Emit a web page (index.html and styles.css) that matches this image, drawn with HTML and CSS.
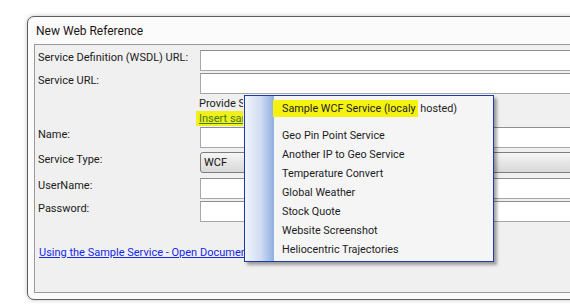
FILE: index.html
```html
<!DOCTYPE html>
<html>
<head>
<meta charset="utf-8">
<link rel="stylesheet" href="styles.css">
</head>
<body>
<div class="window">
  <div class="title">New Web Reference</div>
  <div class="panel">
    <div class="row r1"><div class="lbl">Service Definition (WSDL) URL:</div><div class="field"></div></div>
    <div class="row r2"><div class="lbl">Service URL:</div><div class="field"></div></div>
    <div class="hint">
      <div class="provide">Provide Service details</div>
      <div class="insert"><span class="hl-link"><a href="#" class="link-green">Insert sample service</a></span></div>
    </div>
    <div class="row r-name"><div class="lbl">Name:</div><div class="field"></div></div>
    <div class="row r-type"><div class="lbl">Service Type:</div><div class="select">WCF</div></div>
    <div class="row r-user"><div class="lbl">UserName:</div><div class="field"></div></div>
    <div class="row r-pass"><div class="lbl">Password:</div><div class="field"></div></div>
    <div class="doclink"><a href="#">Using the Sample Service - Open Documentation</a></div>
  </div>
</div>

<div class="menu">
  <div class="strip"></div>
  <ul class="items">
    <li class="item first"><span class="marker">Sample WCF Service (localy</span> hosted)</li>
    <li class="sep"></li>
    <li class="item">Geo Pin Point Service</li>
    <li class="item">Another IP to Geo Service</li>
    <li class="item">Temperature Convert</li>
    <li class="item">Global Weather</li>
    <li class="item">Stock Quote</li>
    <li class="item">Website Screenshot</li>
    <li class="item">Heliocentric Trajectories</li>
  </ul>
</div>
</body>
</html>
```

FILE: styles.css
```css
html, body {
  margin: 0;
  padding: 0;
  background: #ffffff;
  overflow: hidden;
  width: 570px;
  height: 304px;
}
body {
  font-family: Roboto, "Liberation Sans", Arial, sans-serif;
  font-size: 11px;
  color: #1b1b1b;
  position: relative;
}
.window {
  margin: 16px 0 0 27px;
  width: 600px;
  box-sizing: border-box;
  border: 1px solid #5e5e5e;
  border-radius: 7px 7px 0 7px;
  background: #fbfbfb;
  box-shadow: 0 0 4px rgba(0, 0, 0, 0.25);
  padding: 0 6px 6px 6px;
}
.title {
  height: 27px;
  box-sizing: border-box;
  padding: 2px 0 0 2px;
  line-height: 25px;
  font-size: 12px;
  color: #1e1414;
}
.panel {
  height: 249px;
  box-sizing: border-box;
  border: 1px solid #9a9a9a;
  background: #f0f0f0;
  padding: 5px 0 0 3px;
  display: flex;
  flex-direction: column;
}
.row {
  display: flex;
  align-items: flex-start;
  height: 21px;
}
.lbl {
  width: 162px;
  flex: none;
  line-height: 15px;
}
.field {
  flex: 1;
  height: 21px;
  box-sizing: border-box;
  border: 1px solid #a7a7a7;
  border-top-color: #8e8e8e;
  background: #ffffff;
}
.r2 { margin-top: 2px; }
.hint {
  height: 33px;
  box-sizing: border-box;
  padding: 2px 0 0 161px;
  line-height: 15px;
}
.provide {
  color: #1b1b1b;
  width: 44px;
  overflow: hidden;
  white-space: nowrap;
}
.insert {
  margin-left: -3px;
  width: 47px;
  overflow: hidden;
  white-space: nowrap;
}
.hl-link {
  background: #f2f01a;
  padding: 1px 3px 1px 3px;
}
.link-green {
  color: #3f7a1c;
  text-decoration: underline;
}
.r-type { margin-top: 4px; }
.r-user { margin-top: 5px; }
.r-pass { margin-top: 2px; }
.select {
  flex: 1;
  height: 21px;
  box-sizing: border-box;
  border: 1px solid #7d7d7d;
  border-radius: 3px;
  background: linear-gradient(#f6f6f6, #e6e6e6 50%, #d8d8d8);
  line-height: 19px;
  padding-left: 3px;
  color: #111;
}
.doclink {
  margin-top: 23px;
  padding-left: 1px;
  line-height: 15px;
  width: 205px;
  overflow: hidden;
  white-space: nowrap;
}
.doclink a {
  color: #1428e6;
  text-decoration: underline;
}
.menu {
  position: absolute;
  left: 244px;
  top: 95px;
  width: 250px;
  height: 167px;
  box-sizing: border-box;
  border: 1px solid #1b3aa6;
  background: #f5f5f5;
  box-shadow: 3px 3px 3px rgba(0, 0, 0, 0.35);
  display: flex;
}
.strip {
  width: 29px;
  flex: none;
  background: linear-gradient(to right, #f2f5fb, #cfdcf2 55%, #8eb0e2);
}
.items {
  list-style: none;
  margin: 0;
  padding: 3px 0 2px 8px;
  flex: 1;
}
.item {
  height: 19px;
  line-height: 19px;
  white-space: nowrap;
  font-size: 10.8px;
  color: #1c1c24;
}
.sep { height: 8px; }
.marker {
  background: #f4f20e;
  padding: 2px 2px 2px 9px;
  margin-left: -9px;
}
```
